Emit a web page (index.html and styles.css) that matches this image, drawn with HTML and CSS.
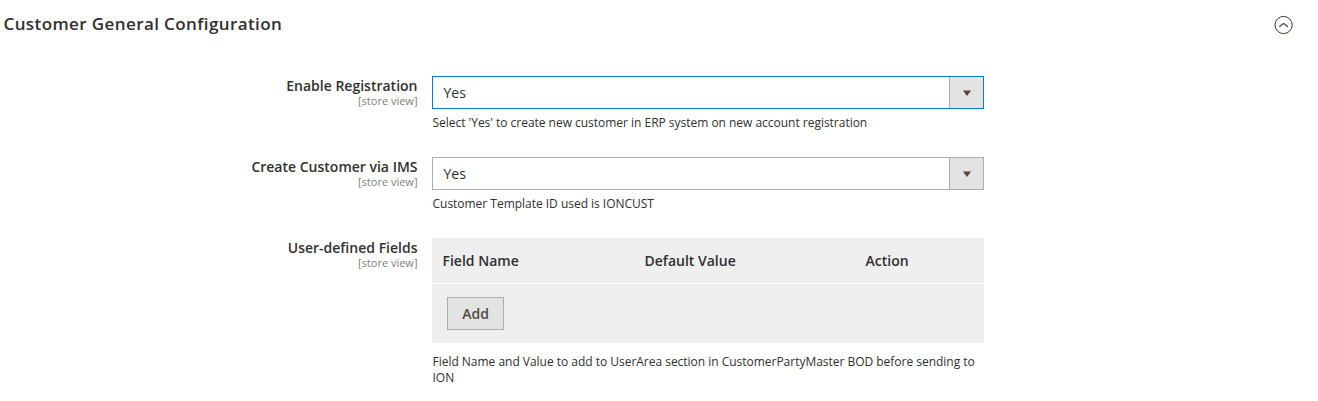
FILE: index.html
```html
<!DOCTYPE html>
<html lang="en">
<head>
<meta charset="utf-8">
<title>Customer General Configuration</title>
<link rel="stylesheet" href="styles.css">
</head>
<body>
<header class="section-head">
  <h1 class="section-title">Customer General Configuration</h1>
  <svg class="collapse" width="20" height="20" viewBox="0 0 20 20" fill="none" stroke="#41362f"><circle cx="9.6" cy="10" r="8.6"/><path d="M5.3 11.8 9.6 8.4l4.3 3.4" stroke-width="1.2"/></svg>
</header>
<main class="fields">
  <div class="field">
    <div class="label"><span class="name">Enable Registration</span><span class="scope">[store view]</span></div>
    <div class="value">
      <div class="select focused"><span class="option">Yes</span><span class="arrow"><svg width="8" height="6" viewBox="0 0 8 6"><path d="M0 .5h8L4 6z" fill="#514943"/></svg></span></div>
      <p class="note">Select 'Yes' to create new customer in ERP system on new account registration</p>
    </div>
  </div>
  <div class="field">
    <div class="label"><span class="name">Create Customer via IMS</span><span class="scope">[store view]</span></div>
    <div class="value">
      <div class="select"><span class="option">Yes</span><span class="arrow"><svg width="8" height="6" viewBox="0 0 8 6"><path d="M0 .5h8L4 6z" fill="#514943"/></svg></span></div>
      <p class="note">Customer Template ID used is IONCUST</p>
    </div>
  </div>
  <div class="field">
    <div class="label"><span class="name">User-defined Fields</span><span class="scope">[store view]</span></div>
    <div class="value">
      <div class="grid">
        <div class="grid-head"><span>Field Name</span><span>Default Value</span><span>Action</span></div>
        <div class="grid-foot"><button class="add" type="button">Add</button></div>
      </div>
      <p class="note grid-note">Field Name and Value to add to UserArea section in CustomerPartyMaster BOD before sending to ION</p>
    </div>
  </div>
</main>
</body>
</html>
```

FILE: styles.css
```css
* { box-sizing: border-box; }
body { margin: 0; background: #fff; color: #303030; font-family: "Open Sans", "Noto Sans", sans-serif; font-size: 14px; }
.section-head { display: flex; justify-content: space-between; height: 76px; padding: 12px 24px 0 3.5px; }
.section-title { margin: 0; font-size: 17px; line-height: 24px; font-weight: 600; letter-spacing: .4px; }
.collapse { margin-top: 3px; }
.fields { width: 984px; }
.field { display: grid; grid-template-columns: 417.5px 552px; column-gap: 14.5px; min-height: 81px; }
.label { display: flex; flex-direction: column; align-items: flex-end; }
.name { font-weight: 600; line-height: 19px; }
.scope { margin-top: -1px; font-size: 11px; line-height: 14px; color: #808080; }
.select { display: flex; height: 33px; border: 1px solid #adadad; }
.select.focused { border-color: #007bdb; }
.option { flex: 1; padding-left: 10.5px; line-height: 31px; }
.arrow { display: flex; align-items: center; justify-content: center; width: 34px; background: #e3e3e3; border-left: 1px solid #adadad; }
.note { margin: 6px 0 0; padding-left: .5px; font-size: 12px; line-height: 16px; letter-spacing: -.02px; }
.grid { background: #efefef; }
.grid-head { display: grid; grid-template-columns: 202px 221px 1fr; height: 46px; padding-left: 10.5px; border-bottom: 1px solid #fff; font-weight: 600; line-height: 46px; }
.grid-foot { height: 59px; padding: 13px 15px; }
.add { display: block; width: 57px; height: 33px; padding: 0; border: 1px solid #adadad; background: #e3e3e3; color: #514943; font: 600 14px/31px "Open Sans", sans-serif; }
.grid-note { margin-top: 11px; }
```
